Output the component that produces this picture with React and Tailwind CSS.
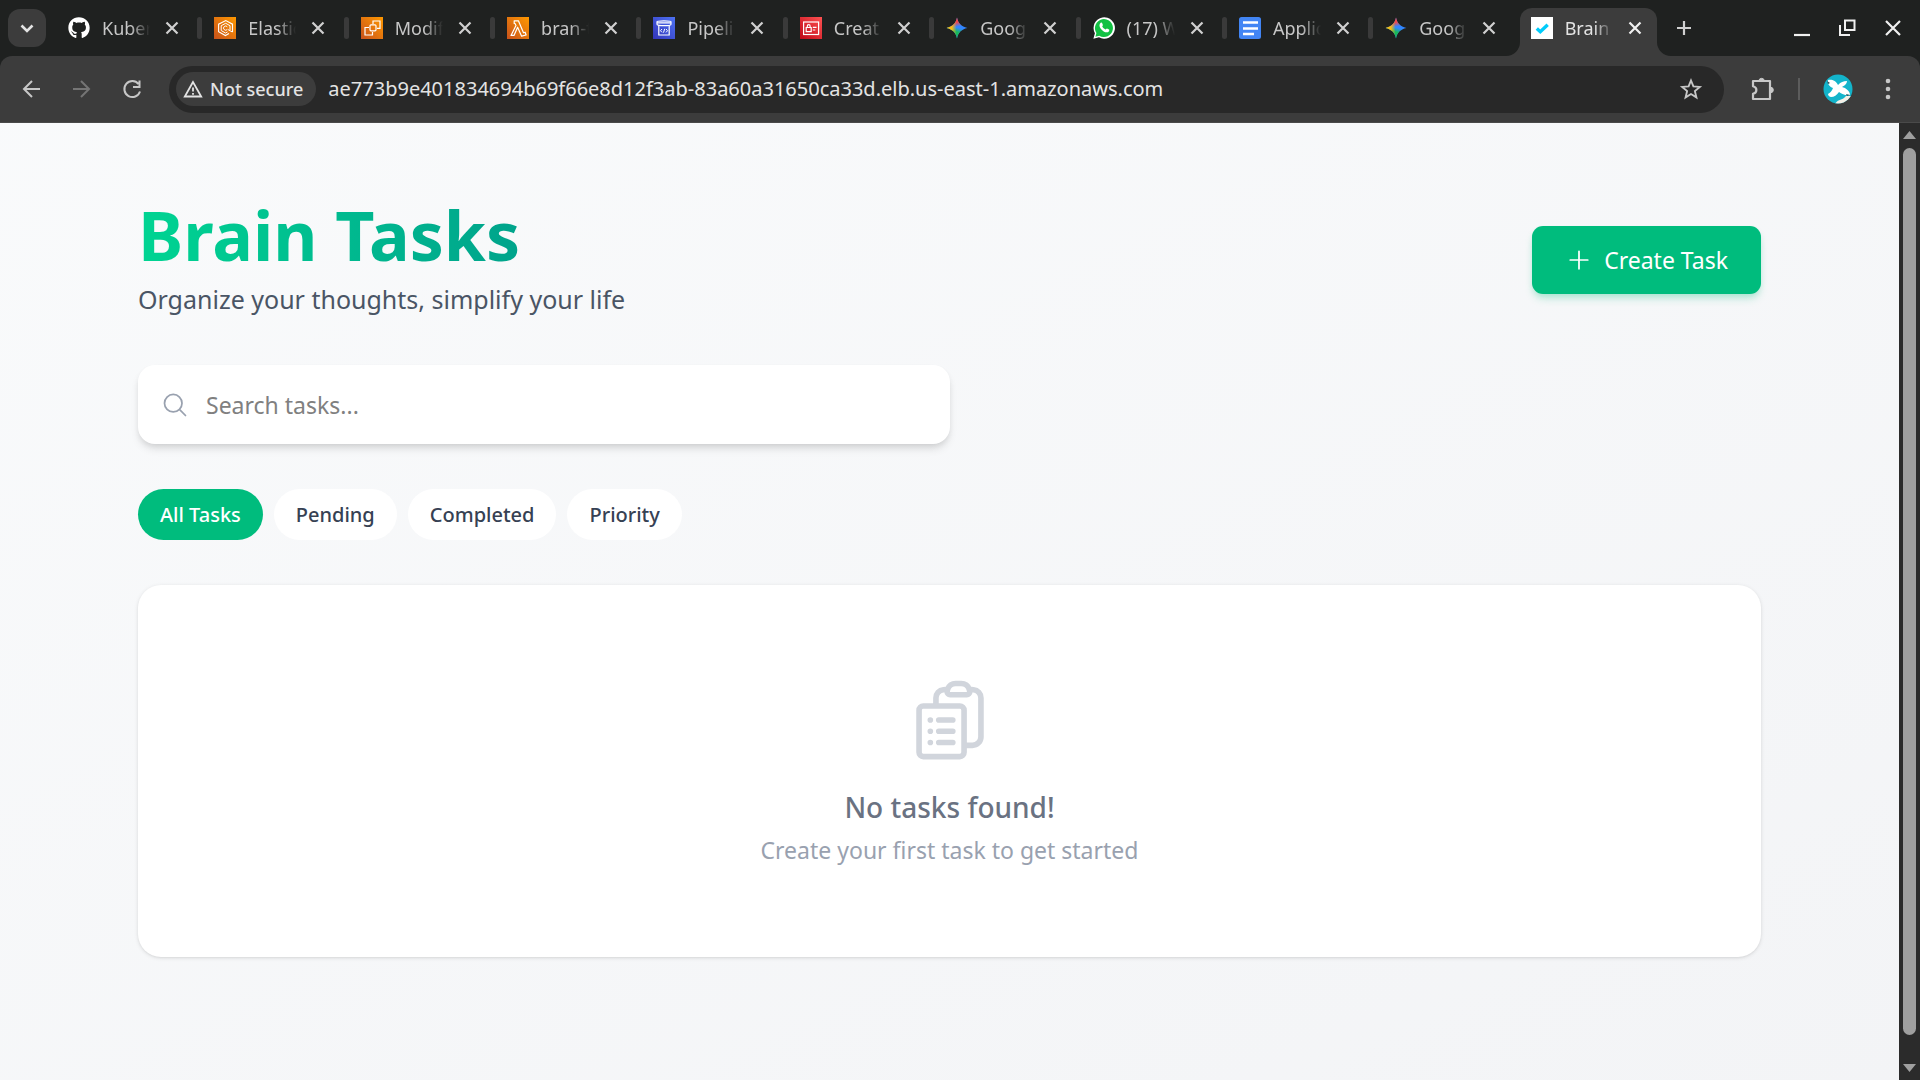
import React, { useState } from "react";
import { FaGithub } from "react-icons/fa";
import {
  HiOutlineClipboardDocumentList,
  HiOutlineMagnifyingGlass,
  HiOutlinePlus,
} from "react-icons/hi2";

function AwsTile({ id, from, to, children }) {
  return (
    <svg viewBox="0 0 22 22" className="size-[22px] shrink-0" fill="none" stroke="#fff" strokeWidth="1.2" aria-hidden="true">
      <defs>
        <linearGradient id={id} x1="0" y1="22" x2="22" y2="0" gradientUnits="userSpaceOnUse">
          <stop stopColor={from} />
          <stop offset="1" stopColor={to} />
        </linearGradient>
      </defs>
      <rect width="22" height="22" fill={`url(#${id})`} stroke="none" />
      {children}
    </svg>
  );
}

const EksIcon = () => (
  <AwsTile id="eks" from="#c8511b" to="#ff9900">
    <path d="M18.5 15V7.2L11.8 3.6 4.600 7.200v7.600l6.800 3.800 3.600-2" strokeWidth="1.100" />
    <path d="M16 13.200V8.700l-4.300-2.400L7.200 8.700v4.800l4.300 2.500 2-1.100M18.300 15l-4.500-2.500" strokeWidth="1" />
    <path d="M13.300 9.800a2.100 2.100 0 1 0 0 2.600" strokeWidth="1" />
  </AwsTile>
);

const Ec2Icon = () => (
  <AwsTile id="ec2" from="#c8511b" to="#ff9900">
    <rect x="9" y="7.8" width="6" height="6" rx="1" />
    <path d="M12 7V4h7v7.3h-3M8 10.5H4V18h7.5v-3" />
  </AwsTile>
);

const LambdaIcon = () => (
  <AwsTile id="lambda" from="#c8511b" to="#ff9900">
    <path d="M7.2 3.8h4.2l5.1 12 1.6-.6 1 2.8-4.5 1.2-4-9L7 18.4H4L9 8.6 8 6.5H7.2z" strokeLinejoin="round" />
  </AwsTile>
);

const PipelineIcon = () => (
  <AwsTile id="pipeline" from="#3334b9" to="#4d72f3">
    <path d="M4 4.8c0-1.2 14-1.2 14 0v2.4c0 2-14 2-14 0zM4 5.8h14M5.8 8.6V18h10.4V8.6" />
    <path d="m9 12-1.5 1.7L9 15.4M13 12l1.5 1.7-1.5 1.7M11.7 11.8l-1.2 3.8" strokeWidth="1" />
  </AwsTile>
);

const IamIcon = () => (
  <AwsTile id="iam" from="#bd0816" to="#ff5252">
    <rect x="3.6" y="5" width="15" height="12.5" />
    <path d="M6.2 10.5h5v4.2h-5zM7.3 10.3V9c0-1.8 2.8-1.8 2.8 0v1.3M12.8 10.3h3.7M12.8 13h2.5" />
  </AwsTile>
);

function GeminiIcon() {
  const id = React.useId();
  const star =
    "M11 .6c1.200 5.800 4.200 9 10.400 10.400C15.200 12.400 12.200 15.600 11 21.400 9.800 15.600 6.800 12.400.6 11 6.800 9.600 9.800 6.400 11 .6z";
  return (
    <svg viewBox="0 0 22 22" className="size-[22px] shrink-0" aria-hidden="true">
      <defs>
        <linearGradient id={`${id}r`} x1="10.500" y1="2" x2="12" y2="9.500" gradientUnits="userSpaceOnUse">
          <stop offset=".4" stopColor="#f94543" />
          <stop offset="1" stopColor="#f94543" stopOpacity="0" />
        </linearGradient>
        <linearGradient id={`${id}y`} x1="2" y1="11" x2="10.500" y2="11" gradientUnits="userSpaceOnUse">
          <stop offset=".45" stopColor="#fabc12" />
          <stop offset="1" stopColor="#fabc12" stopOpacity="0" />
        </linearGradient>
        <linearGradient id={`${id}g`} x1="10" y1="20" x2="12.500" y2="11" gradientUnits="userSpaceOnUse">
          <stop offset=".55" stopColor="#18b95c" />
          <stop offset="1" stopColor="#18b95c" stopOpacity="0" />
        </linearGradient>
      </defs>
      <path d={star} fill="#3186ff" />
      <path d={star} fill={`url(#${id}g)`} />
      <path d={star} fill={`url(#${id}r)`} />
      <path d={star} fill={`url(#${id}y)`} />
    </svg>
  );
}

const WhatsAppIcon = () => (
  <svg viewBox="0 0 22 22" className="size-[22px] shrink-0" aria-hidden="true">
    <path d="M.4 21.800 1.900 16.200A10.700 10.700 0 1 1 6 20.300z" fill="#fff" />
    <path d="M2.400 19.800 3.400 16A9 9 0 1 1 6.300 18.800z" fill="#12c143" />
    <path d="M7.700 5.800c.5-.5 1.200-.4 1.400.2l.8 1.900c.1.400-.8 1.300-.6 1.700.7 1.300 1.700 2.200 3.100 2.800.4.200 1.200-1.100 1.600-.9l2 1c.5.300.3 1.400-.2 1.900-1.300 1.400-3.200 1-5.100 0-1.700-1-3-2.500-3.800-4.100-.7-1.600-.6-3.200.8-4.500z" fill="#fff" />
  </svg>
);

const DocsIcon = () => (
  <svg viewBox="0 0 22 22" className="size-[22px] shrink-0" aria-hidden="true">
    <rect width="22" height="22" rx="2.500" fill="#4285f4" />
    <path d="M4 5.500h15M4 11.500h15M4 17h11" stroke="#fff" strokeWidth="2.600" />
  </svg>
);

const CheckIcon = () => (
  <svg viewBox="0 0 22 22" className="size-[22px] shrink-0" aria-hidden="true">
    <path d="M0 0h22v22H0z" fill="#fff" />
    <path d="m5.800 11.500 3.500 3.200 7.400-7" fill="none" stroke="#00ccfb" strokeWidth="3.400" />
  </svg>
);

const GitHubIcon = () => <FaGithub className="size-[22px] shrink-0 text-white" aria-hidden="true" />;

const TABS = [
  { title: "Kuber", Icon: GitHubIcon },
  { title: "Elastic", Icon: EksIcon },
  { title: "Modif", Icon: Ec2Icon },
  { title: "bran-t", Icon: LambdaIcon },
  { title: "Pipeli", Icon: PipelineIcon },
  { title: "Creat", Icon: IamIcon },
  { title: "Goog", Icon: GeminiIcon },
  { title: "(17) W", Icon: WhatsAppIcon },
  { title: "Applic", Icon: DocsIcon },
  { title: "Goog", Icon: GeminiIcon },
];

function Line({ d, size = "size-6", width = 2, className = "" }) {
  return (
    <svg viewBox="0 0 24 24" fill="none" stroke="currentColor" strokeWidth={width} className={`${size} shrink-0 ${className}`} aria-hidden="true">
      <path d={d} />
    </svg>
  );
}

function TabBody({ title, Icon, active }) {
  return (
    <>
      <Icon />
      <span
        className={
          "ml-3 w-12 overflow-hidden whitespace-nowrap text-[18px] leading-6 [mask-image:linear-gradient(to_right,black_60%,transparent)] " +
          (active ? "text-[#e3e3e3]" : "text-[#c7c7c7]")
        }
      >
        {title}
      </span>
      <button aria-label={`Close ${title}`} className={"ml-[10px] " + (active ? "text-[#f0f0f0]" : "text-[#d0d0d0]")}>
        <Line d="m6.500 6.500 11 11m0-11-11 11" width={2.2} />
      </button>
    </>
  );
}

function TabStrip() {
  return (
    <div className="flex h-14 items-center bg-[#1f2120]">
      <button aria-label="Search tabs" className="ml-2 flex size-[38px] shrink-0 items-center justify-center rounded-xl bg-[#3c3c3c] text-[#e3e3e3]">
        <Line d="m6.500 9.500 5.500 5.500 5.500-5.500" width={2.6} />
      </button>
      <div className="ml-[10px] grid h-full min-w-0 flex-1 grid-cols-11">
        {TABS.map((tab, i) => (
          <div key={i} className="flex min-w-0 items-center pl-3">
            <TabBody {...tab} />
            {i < TABS.length - 1 && <span className="ml-auto h-[22px] w-[5px] rounded-sm bg-[#3a3a3a]" />}
          </div>
        ))}
        <div className="flex min-w-0 items-end">
          <div className="relative flex h-12 w-[137px] items-center rounded-t-xl bg-[#3c3c3c] pb-2 pl-[11px]">
            <svg viewBox="0 0 14 14" className="absolute bottom-0 -left-[14px] size-[14px]" fill="#3c3c3c" aria-hidden="true">
              <path d="M14 0v14H0A14 14 0 0 0 14 0z" />
            </svg>
            <TabBody title="Brain" Icon={CheckIcon} active />
            <svg viewBox="0 0 14 14" className="absolute -right-[14px] bottom-0 size-[14px]" fill="#3c3c3c" aria-hidden="true">
              <path d="M0 0v14h14A14 14 0 0 1 0 0z" />
            </svg>
          </div>
        </div>
      </div>
      <div className="flex w-[254px] shrink-0 items-center pl-[6px] text-[#f0f0f0]">
        <button aria-label="New tab" className="text-[#d0d0d0]">
          <Line d="M12 5v14M5 12h14" width={2.2} />
        </button>
        <button aria-label="Minimize" className="ml-[94px]">
          <Line d="M4 19h16" width={2.2} />
        </button>
        <button aria-label="Restore" className="ml-[21px]">
          <Line d="M10 4.500h9.500V14H10zM5 9v10h10" width={2} />
        </button>
        <button aria-label="Close window" className="ml-[22px]">
          <Line d="m5 5 14 14m0-14L5 19" width={2.2} />
        </button>
      </div>
    </div>
  );
}

function Toolbar() {
  return (
    <div className="bg-[#1f2120]">
      <div className="flex h-[67px] items-center rounded-t-xl border-b border-[#4a4a4a] bg-[#3c3c3c] text-[#c7c7c7]">
        <button aria-label="Back" className="ml-5 shrink-0">
          <Line d="M20 12H4.500M12 4l-8 8 8 8" />
        </button>
        <button aria-label="Forward" className="ml-[26px] shrink-0 text-[#757575]">
          <Line d="M3 12h15.500M11 4l8 8-8 8" />
        </button>
        <button aria-label="Reload" className="ml-[26px] shrink-0">
          <Line d="M18.600 7A8 8 0 1 0 20 14.500M19.500 3.500v6.500H13" />
        </button>
        <div className="ml-[25px] flex h-[47px] min-w-0 flex-1 items-center rounded-full bg-[#282828] pr-[21px] pl-[7px]">
          <button className="flex h-[34px] shrink-0 items-center rounded-full bg-[#3c3c3c] pr-[13px] pl-[5px] text-[18px] font-medium text-[#e3e3e3]">
            <svg viewBox="0 0 24 24" className="mr-[5px] size-6" fill="none" stroke="currentColor" strokeWidth="1.800" aria-hidden="true">
              <path d="M12 5 3.800 19.500h16.400zM12 10.500v4M12 16v1.800" />
            </svg>
            Not secure
          </button>
          <input
            aria-label="Address"
            readOnly
            value="ae773b9e401834694b69f66e8d12f3ab-83a60a31650ca33d.elb.us-east-1.amazonaws.com"
            className="ml-3 min-w-0 flex-1 bg-transparent text-[20px] leading-7 text-[#e3e3e3] outline-none"
          />
          <button aria-label="Bookmark this tab" className="shrink-0">
            <Line d="m12 3.500 2.400 5.900 6.400.5-4.900 4.200 1.500 6.300-5.400-3.400-5.400 3.400 1.500-6.300-4.900-4.200 6.400-.5z" width={1.9} />
          </button>
        </div>
        <button aria-label="Extensions" className="ml-[25px] shrink-0">
          <svg viewBox="0 0 26 26" className="size-[26px]" fill="none" stroke="currentColor" strokeWidth="2.200" strokeLinejoin="round" aria-hidden="true">
            <path d="M4 5h17v18H4v-5.200c4.500-1 4.500-6.600 0-7.600z" />
            <path d="M9.800 4.500a2.900 2.900 0 0 1 5.600 0zM21.500 11.200a2.800 2.800 0 0 1 0 5.600z" fill="currentColor" strokeWidth="1" />
          </svg>
        </button>
        <span className="ml-[23px] h-[22px] w-[2px] shrink-0 bg-[#5c5c5c]" />
        <button aria-label="Profile" className="ml-[23px] shrink-0">
          <svg viewBox="0 0 30 30" className="size-[30px]" aria-hidden="true">
            <defs>
              <clipPath id="avatar">
                <circle cx="15" cy="15" r="14.500" />
              </clipPath>
            </defs>
            <g clipPath="url(#avatar)">
              <path d="M0 0h30v30H0z" fill="#13b4cb" />
              <path d="M12 30c2-4 6-4 9-6l2-2h7v8z" fill="#f4efe6" />
              <path d="M19 30c2-2 4-1 6-3l3 3z" fill="#e88a4a" />
              <path d="M5 6c3-1 8 0 10 5 3-3 5-4 9-4 0 3-3 5-5 6 4 1 8 4 8 8-4 1-8-1-11-3-2 3-5 5-8 5-1 0-3-1-3-3 2-1 4-3 5-6-3-1-6-4-5-8z" fill="#fff" />
              <path d="m23 20 4 1-3 1zM4 7l3 2-2 1z" fill="#24505a" />
            </g>
          </svg>
        </button>
        <button aria-label="Browser menu" className="mr-5 ml-[23px] shrink-0">
          <svg viewBox="0 0 24 24" className="size-6" fill="currentColor" aria-hidden="true">
            <circle cx="12" cy="4" r="2.300" />
            <circle cx="12" cy="12" r="2.300" />
            <circle cx="12" cy="20" r="2.300" />
          </svg>
        </button>
      </div>
    </div>
  );
}

const FILTERS = ["All Tasks", "Pending", "Completed", "Priority"];

function TasksPage() {
  const [filter, setFilter] = useState("All Tasks");
  return (
    <main className="min-w-0 flex-1 bg-linear-to-br from-gray-50 to-gray-100">
      <div className="mx-auto max-w-[1669px] px-[23px] pt-[78px] pb-20">
        <header className="mb-[46px] flex items-center justify-between">
          <div>
            <h1 className="mb-[11px] bg-linear-to-r from-emerald-400 to-teal-600 bg-clip-text text-[68px] leading-[68px] font-bold text-transparent">
              Brain Tasks
            </h1>
            <p className="text-[25px] leading-[39px] text-gray-600">Organize your thoughts, simplify your life</p>
          </div>
          <button className="flex items-center gap-[11px] rounded-[11px] bg-emerald-500 px-[33px] py-[17px] text-[23px] leading-[34px] text-white shadow-[0_6px_8px_-1px_#00bc7d33,0_3px_6px_-2px_#00bc7d33]">
            <HiOutlinePlus className="size-7" />
            Create Task
          </button>
        </header>

        <label className="mb-[45px] flex h-[79px] w-1/2 items-center gap-[17px] rounded-[17px] bg-white px-[23px] shadow-[0_6px_8px_-1px_#0000001a,0_3px_6px_-2px_#0000001a]">
          <HiOutlineMagnifyingGlass className="size-7 shrink-0 text-gray-400" />
          <span className="sr-only">Search tasks</span>
          <input
            type="text"
            placeholder="Search tasks..."
            className="min-w-0 flex-1 bg-transparent text-[23px] leading-[34px] text-gray-800 outline-none placeholder:text-[#808080]"
          />
        </label>

        <div className="mb-[45px] flex gap-[11px]">
          {FILTERS.map((name) => (
            <button
              key={name}
              onClick={() => setFilter(name)}
              className={
                "rounded-full px-[22px] py-[11px] text-[20px] leading-[29px] font-medium " +
                (filter === name ? "bg-emerald-500 text-white" : "bg-white text-gray-700")
              }
            >
              {name}
            </button>
          ))}
        </div>

        <section className="flex flex-col items-center rounded-[23px] bg-white p-[90px] text-center shadow-[0_1px_4px_#0000001a,0_1px_3px_-1px_#0000001a]">
          <HiOutlineClipboardDocumentList className="mb-[23px] size-[90px] text-gray-300" />
          <h2 className="mb-[6px] text-[28px] leading-[39px] font-medium text-gray-500">No tasks found!</h2>
          <p className="text-[23px] leading-[34px] text-gray-400">Create your first task to get started</p>
        </section>
      </div>
    </main>
  );
}

function ScrollRail() {
  return (
    <div className="flex w-[21px] shrink-0 flex-col items-center bg-[#2b2b2b] py-2 text-[#9f9f9f]" aria-hidden="true">
      <svg viewBox="0 0 13 8" className="h-2 w-[13px]" fill="currentColor">
        <path d="M6.500 0 13 8H0z" />
      </svg>
      <span className="mt-[9px] mb-[29px] w-[13px] flex-1 rounded-full bg-[#9f9f9f]" />
      <svg viewBox="0 0 13 8" className="h-2 w-[13px]" fill="currentColor">
        <path d="M0 0h13L6.500 8z" />
      </svg>
    </div>
  );
}

export default function App() {
  return (
    <div className="flex min-h-screen flex-col font-['Noto_Sans',sans-serif]">
      <TabStrip />
      <Toolbar />
      <div className="flex flex-1">
        <TasksPage />
        <ScrollRail />
      </div>
    </div>
  );
}
